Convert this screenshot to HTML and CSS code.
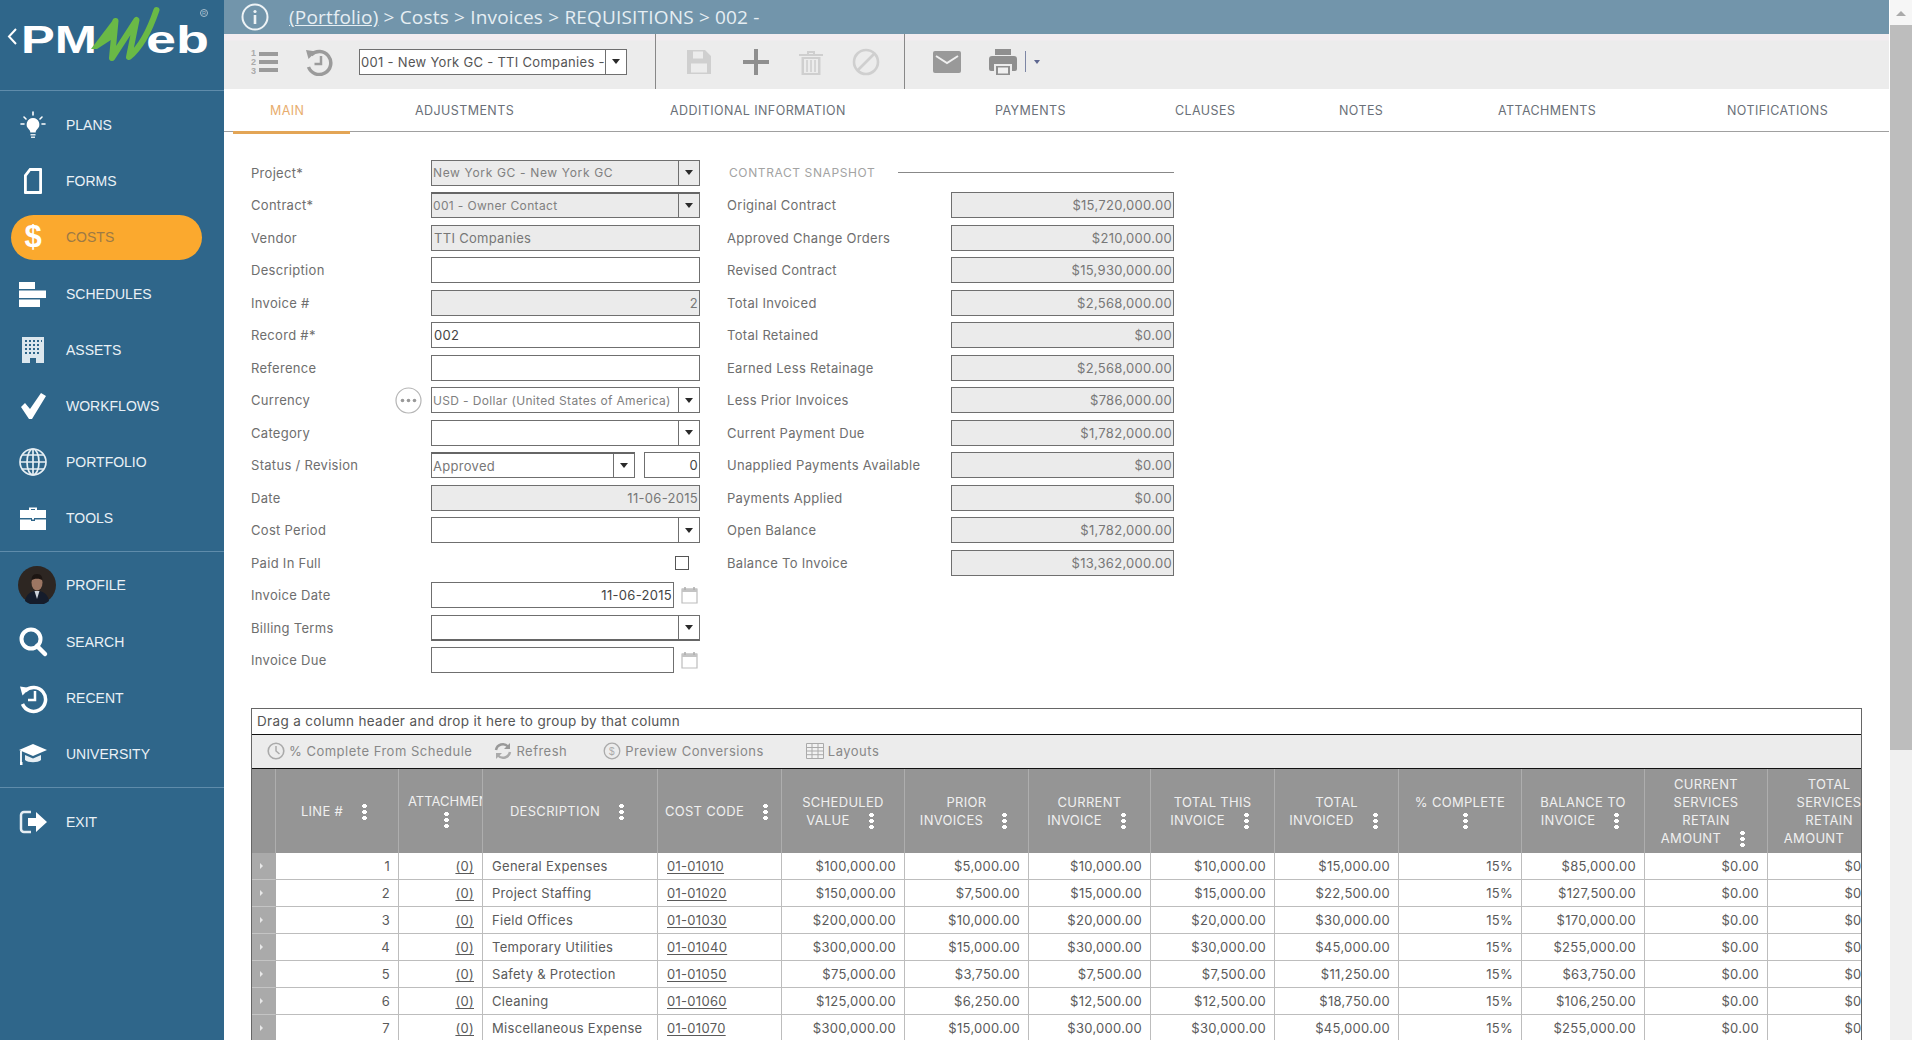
FILE: index.html
```html
<!DOCTYPE html>
<html lang="en">
<head>
<meta charset="utf-8">
<title>PMWeb - Invoices</title>
<link rel="stylesheet" href="styles.css">
</head>
<body>
<div class="app">
  <nav class="sidebar">
    <div class="logo">
      <svg width="224" height="90" viewBox="0 0 224 90">
        <polyline points="16,29 9,36.500 16,44" fill="none" stroke="#fff" stroke-width="2"/>
        <text x="21" y="52.500" class="logo-text" font-size="38" textLength="76" lengthAdjust="spacingAndGlyphs">PM</text>
        <text x="146" y="52.500" class="logo-text" font-size="38" textLength="63" lengthAdjust="spacingAndGlyphs">eb</text>
        <path d="M91 49 L113 20 L118 20 L114 38 L97 49 Z" fill="#6ab946"/>
        <path d="M115.500 21 L112 58 L136.500 20 L129 57 Q145 44 156.500 10" fill="none" stroke="#6ab946" stroke-width="6" stroke-linejoin="round" stroke-linecap="round"/>
        <circle cx="204" cy="13" r="3.500" fill="none" stroke="#a9bfcd" stroke-width="1"/>
        <text x="204" y="15" class="logo-r" font-size="5.500" text-anchor="middle">R</text>
      </svg>
    </div>
    <div class="nav-group first">
      <a class="nav-item">
        <svg class="nav-icon" viewBox="0 0 32 32"><path d="M16 9a6.500 6.500 0 0 0-4 11.500c1 1 1.300 2 1.300 3h5.400c0-1 .3-2 1.300-3A6.500 6.500 0 0 0 16 9z" fill="#fff"/><path d="M13.500 25h5v1.500h-5zM14 27.500h4V29h-4z" fill="#dfe8ee"/><path d="M16 3v3M7 8l2 2M25 8l-2 2M4 15h3M25 15h3" stroke="#fff" stroke-width="1.600" stroke-linecap="round"/></svg>
        <span>PLANS</span>
      </a>
      <a class="nav-item">
        <svg class="nav-icon" viewBox="0 0 32 32"><path d="M12.500 3H24a1 1 0 0 1 1 1v24a1 1 0 0 1-1 1H8a1 1 0 0 1-1-1V10z M12.500 7.500 9.800 11v15h12.400V6H13.500z" fill="#fff" fill-rule="evenodd"/></svg>
        <span>FORMS</span>
      </a>
      <a class="nav-item active">
        <span class="dollar">$</span>
        <span>COSTS</span>
      </a>
      <a class="nav-item">
        <svg class="nav-icon" viewBox="0 0 32 32"><path d="M2 4h16v7H2zM2 12.500h27v7.500H2zM2 21.500h21V29H2z" fill="#fff"/></svg>
        <span>SCHEDULES</span>
      </a>
      <a class="nav-item">
        <svg class="nav-icon" viewBox="0 0 32 32"><path d="M5 3h22v26H19v-5h-6v5H5z" fill="#dce7ee"/><path d="M8 6h2v2H8zM12 6h2v2h-2zM16 6h2v2h-2zM20 6h2v2h-2zM24 6h1v2h-1zM8 10h2v2H8zM12 10h2v2h-2zM16 10h2v2h-2zM20 10h2v2h-2zM8 14h2v2H8zM12 14h2v2h-2zM16 14h2v2h-2zM20 14h2v2h-2zM8 18h2v2H8zM12 18h2v2h-2zM16 18h2v2h-2zM20 18h2v2h-2z" fill="#2f668a"/></svg>
        <span>ASSETS</span>
      </a>
      <a class="nav-item">
        <svg class="nav-icon" viewBox="0 0 32 32"><path d="M4 17l4-4 5 6L24 3l5 3-14 23h-3z" fill="#fff"/></svg>
        <span>WORKFLOWS</span>
      </a>
      <a class="nav-item">
        <svg class="nav-icon" viewBox="0 0 32 32"><g fill="none" stroke="#e6eef3" stroke-width="1.700"><circle cx="16" cy="16" r="13"/><ellipse cx="16" cy="16" rx="6" ry="13"/><path d="M16 3v26M3 16h26M5 9h22M5 23h22"/></g></svg>
        <span>PORTFOLIO</span>
      </a>
      <a class="nav-item">
        <svg class="nav-icon" viewBox="0 0 32 32"><path d="M12 8V5.500h8V8h-2V7h-4v1z" fill="#fff"/><path d="M3 8h26v8H17v1.500h-2V16H3zM3 17.500h11V19h4v-1.500h11V28H3z" fill="#fff"/></svg>
        <span>TOOLS</span>
      </a>
    </div>
    <div class="nav-group">
      <a class="nav-item">
        <svg class="nav-icon avatar" viewBox="0 0 38 38"><circle cx="19" cy="19" r="19" fill="#2d2622"/><path d="M7 35c1-7 6-9 9-10h6c3 1 8 3 9 10a19 19 0 0 1-24 0z" fill="#151c2b"/><path d="M16.500 25l2.500 8 2.500-8z" fill="#cfd3da"/><ellipse cx="19" cy="16.500" rx="5.500" ry="8" fill="#9c7663"/><path d="M13.500 14.500c0-5.500 3-6.500 5.500-6.500s5.500 1 5.500 6.500c-2-2.500-9-2.500-11 0z" fill="#1c1512"/></svg>
        <span>PROFILE</span>
      </a>
      <a class="nav-item">
        <svg class="nav-icon" viewBox="0 0 32 32"><circle cx="14" cy="13" r="9.500" fill="none" stroke="#fff" stroke-width="4"/><path d="M20 20l8 8" stroke="#fff" stroke-width="4.500" stroke-linecap="round"/></svg>
        <span>SEARCH</span>
      </a>
      <a class="nav-item">
        <svg class="nav-icon" viewBox="0 0 32 32"><path d="M8 9a12 12 0 1 1-2.500 13" fill="none" stroke="#fff" stroke-width="3.500"/><path d="M3 4.500l10 1.500-7.500 7.500z" fill="#fff"/><path d="M18 9v9h-7" fill="none" stroke="#fff" stroke-width="2.500"/></svg>
        <span>RECENT</span>
      </a>
      <a class="nav-item">
        <svg class="nav-icon" viewBox="0 0 32 32"><path d="M16 6 2 12l14 6 14-6z" fill="#fff"/><path d="M8 17v5c3 3 13 3 16 0v-5l-8 3.500z" fill="#e6eef3"/><path d="M4 13v11" stroke="#fff" stroke-width="1.800"/><path d="M3 24h2.500v3H3z" fill="#fff"/></svg>
        <span>UNIVERSITY</span>
      </a>
    </div>
    <div class="nav-group last">
      <a class="nav-item">
        <svg class="nav-icon" viewBox="0 0 32 32"><path d="M14 6H7a3 3 0 0 0-3 3v14a3 3 0 0 0 3 3h7" fill="none" stroke="#e6eef3" stroke-width="2.500"/><path d="M11 12h8V6l11 10-11 10v-6h-8z" fill="#fff"/></svg>
        <span>EXIT</span>
      </a>
    </div>
  </nav>

  <main class="main">
    <header class="topbar">
      <svg class="info" width="28" height="28" viewBox="0 0 28 28"><circle cx="14" cy="14" r="12.500" fill="none" stroke="#eef3f6" stroke-width="2"/><circle cx="14" cy="8.500" r="1.600" fill="#eef3f6"/><path d="M12.700 12h2.600v9h-2.600z" fill="#eef3f6"/></svg>
      <div class="crumbs"><a>(Portfolio)</a> &gt; Costs &gt; Invoices &gt; REQUISITIONS &gt; 002 -</div>
    </header>

    <div class="toolbar">
      <svg class="tool tool-list" width="28" height="28" viewBox="0 0 28 28"><path d="M8 4h19v4H8zM8 12h19v4H8zM8 20h19v4H8z" fill="#9b9b9b"/><text x="0" y="8" class="tool-num">1</text><text x="0" y="17" class="tool-num">2</text><text x="0" y="26" class="tool-num">3</text></svg>
      <svg class="tool tool-hist" width="28" height="28" viewBox="0 0 28 28"><path d="M6 7a11.500 11.500 0 1 1-2.500 12" fill="none" stroke="#9b9b9b" stroke-width="3.500"/><path d="M1 2l10 1.500-7.500 7.500z" fill="#9b9b9b"/><path d="M16 8v8H9.500" fill="none" stroke="#9b9b9b" stroke-width="2.500"/></svg>
      <div class="select record-select">
        <span class="select-text">001 - New York GC - TTI Companies -</span>
        <span class="select-btn"><i class="arrow"></i></span>
      </div>
      <div class="tool-sep sep-a"></div>
      <svg class="tool tool-save" width="28" height="28" viewBox="0 0 28 28"><path d="M2 2h18l6 6v18H2z M8 3.500v7h10v-7z M6 15.500v9h16v-9z" fill="#cfcfcf" fill-rule="evenodd"/></svg>
      <svg class="tool tool-plus" width="28" height="28" viewBox="0 0 28 28"><path d="M12 1h4v11h11v4H16v11h-4V16H1v-4h11z" fill="#8f8f8f"/></svg>
      <svg class="tool tool-trash" width="28" height="28" viewBox="0 0 28 28"><path d="M2 6h24v2H2zM10 3h8v3h-2V5h-4v1h-2zM4.500 9h19v18h-19z M7 11v14h14V11z" fill="#cfcfcf" fill-rule="evenodd"/><path d="M10 12v12M14 12v12M18 12v12" stroke="#cfcfcf" stroke-width="1.600"/></svg>
      <svg class="tool tool-ban" width="28" height="28" viewBox="0 0 28 28"><circle cx="14" cy="14" r="12" fill="none" stroke="#cfcfcf" stroke-width="2.600"/><path d="M6 22 22 6" stroke="#cfcfcf" stroke-width="2.600"/></svg>
      <div class="tool-sep sep-b"></div>
      <svg class="tool tool-mail" width="28" height="22" viewBox="0 0 28 22"><path d="M2 0h24a2 2 0 0 1 2 2v18a2 2 0 0 1-2 2H2a2 2 0 0 1-2-2V2a2 2 0 0 1 2-2z" fill="#999"/><path d="M3 5l11 7 11-7" fill="none" stroke="#f0f0f0" stroke-width="2"/></svg>
      <svg class="tool tool-print" width="28" height="26" viewBox="0 0 28 26"><path d="M6 0h16v6H6z" fill="#8f8f8f"/><path d="M3 7h22a3 3 0 0 1 3 3v10a2 2 0 0 1-2 2h-3v-7H5v7H2a2 2 0 0 1-2-2V10a3 3 0 0 1 3-3z" fill="#8f8f8f"/><path d="M7 17h14v9H7z" fill="#8f8f8f"/><path d="M9 18.500h10v6H9z" fill="#f0f0f0"/></svg>
      <span class="print-sep"></span>
      <i class="print-arrow"></i>
    </div>

    <div class="tabs">
      <a class="tab active">MAIN</a>
      <a class="tab">ADJUSTMENTS</a>
      <a class="tab">ADDITIONAL INFORMATION</a>
      <a class="tab">PAYMENTS</a>
      <a class="tab">CLAUSES</a>
      <a class="tab">NOTES</a>
      <a class="tab">ATTACHMENTS</a>
      <a class="tab">NOTIFICATIONS</a>
    </div>

    <section class="form">
      <div class="form-left">
        <label>Project*</label>
        <div class="select ro"><span class="select-text small wide">New York GC - New York GC</span><span class="select-btn"><i class="arrow"></i></span></div>
        <label>Contract*</label>
        <div class="select ro thick-top"><span class="select-text small">001 - Owner Contact</span><span class="select-btn"><i class="arrow"></i></span></div>
        <label>Vendor</label>
        <div class="box ro">TTI Companies</div>
        <label>Description</label>
        <div class="box"></div>
        <label>Invoice #</label>
        <div class="box ro num">2</div>
        <label>Record #*</label>
        <div class="box dark">002</div>
        <label>Reference</label>
        <div class="box"></div>
        <label class="with-btn">Currency
          <svg width="27" height="27" viewBox="0 0 27 27"><circle cx="13.500" cy="13.500" r="12.500" fill="#fff" stroke="#b5b5b5" stroke-width="1.200"/><circle cx="7.500" cy="13.500" r="1.800" fill="#999"/><circle cx="13.500" cy="13.500" r="1.800" fill="#999"/><circle cx="19.500" cy="13.500" r="1.800" fill="#999"/></svg>
        </label>
        <div class="select"><span class="select-text small">USD - Dollar (United States of America)</span><span class="select-btn"><i class="arrow"></i></span></div>
        <label>Category</label>
        <div class="select"><span class="select-text"></span><span class="select-btn"><i class="arrow"></i></span></div>
        <label>Status / Revision</label>
        <div class="pair">
          <div class="select thick-top"><span class="select-text">Approved</span><span class="select-btn"><i class="arrow"></i></span></div>
          <div class="box num dark">0</div>
        </div>
        <label>Date</label>
        <div class="box ro num">11-06-2015</div>
        <label>Cost Period</label>
        <div class="select"><span class="select-text"></span><span class="select-btn"><i class="arrow"></i></span></div>
        <label>Paid In Full</label>
        <div class="check-cell"><span class="check"></span></div>
        <label>Invoice Date</label>
        <div class="date-row">
          <div class="box num dark">11-06-2015</div>
          <svg class="cal" width="17" height="18" viewBox="0 0 17 18"><path d="M1 3h15v14H1z" fill="#fff" stroke="#bdbdbd" stroke-width="1.200"/><path d="M1 2.500h15V6H1z" fill="#c4c4c4"/><path d="M4 1v3M13 1v3" stroke="#b0b0b0" stroke-width="1.600"/></svg>
        </div>
        <label>Billing Terms</label>
        <div class="select thick-bottom"><span class="select-text"></span><span class="select-btn"><i class="arrow"></i></span></div>
        <label>Invoice Due</label>
        <div class="date-row">
          <div class="box"></div>
          <svg class="cal" width="17" height="18" viewBox="0 0 17 18"><path d="M1 3h15v14H1z" fill="#fff" stroke="#bdbdbd" stroke-width="1.200"/><path d="M1 2.500h15V6H1z" fill="#c4c4c4"/><path d="M4 1v3M13 1v3" stroke="#b0b0b0" stroke-width="1.600"/></svg>
        </div>
      </div>
      <div class="form-right">
        <div class="snap-title"><span>CONTRACT SNAPSHOT</span><i></i></div>
        <label>Original Contract</label><div class="box ro num">$15,720,000.00</div>
        <label>Approved Change Orders</label><div class="box ro num">$210,000.00</div>
        <label>Revised Contract</label><div class="box ro num">$15,930,000.00</div>
        <label>Total Invoiced</label><div class="box ro num">$2,568,000.00</div>
        <label>Total Retained</label><div class="box ro num">$0.00</div>
        <label>Earned Less Retainage</label><div class="box ro num">$2,568,000.00</div>
        <label>Less Prior Invoices</label><div class="box ro num">$786,000.00</div>
        <label>Current Payment Due</label><div class="box ro num">$1,782,000.00</div>
        <label>Unapplied Payments Available</label><div class="box ro num">$0.00</div>
        <label>Payments Applied</label><div class="box ro num">$0.00</div>
        <label>Open Balance</label><div class="box ro num">$1,782,000.00</div>
        <label>Balance To Invoice</label><div class="box ro num">$13,362,000.00</div>
      </div>
    </section>

    <section class="grid">
      <div class="group-bar">Drag a column header and drop it here to group by that column</div>
      <div class="grid-tools">
        <span class="gt gt-clock"><svg width="18" height="18" viewBox="0 0 18 18"><circle cx="9" cy="9" r="7.800" fill="none" stroke="#aaa" stroke-width="1.600"/><path d="M9 4v5l3.500 3" fill="none" stroke="#aaa" stroke-width="1.500"/></svg>% Complete From Schedule</span>
        <span class="gt gt-refresh"><svg width="18" height="18" viewBox="0 0 18 18"><path d="M2 8a7 7 0 0 1 12-3.500" fill="none" stroke="#999" stroke-width="2.500"/><path d="M16 1v6h-6z" fill="#999"/><path d="M16 10a7 7 0 0 1-12 3.500" fill="none" stroke="#aaa" stroke-width="2.500"/><path d="M2 17v-6h6z" fill="#aaa"/></svg>Refresh</span>
        <span class="gt gt-preview"><svg width="18" height="18" viewBox="0 0 18 18"><circle cx="9" cy="9" r="7.800" fill="none" stroke="#aaa" stroke-width="1.300"/><text x="9" y="12.500" class="gt-dollar" text-anchor="middle">$</text></svg>Preview Conversions</span>
        <span class="gt gt-layouts"><svg width="18" height="16" viewBox="0 0 18 16"><path d="M.5.500h17v15H.5zM.5 4.500h17M.5 8h17M.5 11.700h17M6 .500v15M12 .500v15" fill="#f2f2f2" stroke="#aaa" stroke-width="1"/></svg>Layouts</span>
      </div>
      <table class="lines">
        <colgroup>
          <col class="c-exp"><col class="c-123"><col class="c-84"><col class="c-175"><col class="c-124"><col class="c-123"><col class="c-124"><col class="c-122"><col class="c-124"><col class="c-124"><col class="c-123"><col class="c-123"><col class="c-123"><col class="c-123">
        </colgroup>
        <thead>
          <tr>
            <th></th>
            <th>LINE #<i class="kebab"></i></th>
            <th class="attach"><span class="nowrap">ATTACHMENTS</span><br><i class="kebab attach-dots"></i></th>
            <th>DESCRIPTION<i class="kebab"></i></th>
            <th class="tight">COST CODE<i class="kebab"></i></th>
            <th>SCHEDULED<br>VALUE<i class="kebab"></i></th>
            <th>PRIOR<br>INVOICES<i class="kebab"></i></th>
            <th>CURRENT<br>INVOICE<i class="kebab"></i></th>
            <th>TOTAL THIS<br>INVOICE<i class="kebab"></i></th>
            <th>TOTAL<br>INVOICED<i class="kebab"></i></th>
            <th>% COMPLETE<br><i class="kebab solo"></i></th>
            <th>BALANCE TO<br>INVOICE<i class="kebab"></i></th>
            <th>CURRENT<br>SERVICES<br>RETAIN<br>AMOUNT<i class="kebab"></i></th>
            <th class="tight">TOTAL<br><span class="nowrap">SERVICES</span><br>RETAIN<br>AMOUNT<i class="kebab"></i></th>
          </tr>
        </thead>
        <tbody>
          <tr><td class="exp"><i></i></td><td class="r">1</td><td class="r"><u>(0)</u></td><td>General Expenses</td><td><u>01-01010</u></td><td class="r">$100,000.00</td><td class="r">$5,000.00</td><td class="r">$10,000.00</td><td class="r">$10,000.00</td><td class="r">$15,000.00</td><td class="r">15%</td><td class="r">$85,000.00</td><td class="r">$0.00</td><td class="r">$0.00</td></tr>
          <tr><td class="exp"><i></i></td><td class="r">2</td><td class="r"><u>(0)</u></td><td>Project Staffing</td><td><u>01-01020</u></td><td class="r">$150,000.00</td><td class="r">$7,500.00</td><td class="r">$15,000.00</td><td class="r">$15,000.00</td><td class="r">$22,500.00</td><td class="r">15%</td><td class="r">$127,500.00</td><td class="r">$0.00</td><td class="r">$0.00</td></tr>
          <tr><td class="exp"><i></i></td><td class="r">3</td><td class="r"><u>(0)</u></td><td>Field Offices</td><td><u>01-01030</u></td><td class="r">$200,000.00</td><td class="r">$10,000.00</td><td class="r">$20,000.00</td><td class="r">$20,000.00</td><td class="r">$30,000.00</td><td class="r">15%</td><td class="r">$170,000.00</td><td class="r">$0.00</td><td class="r">$0.00</td></tr>
          <tr><td class="exp"><i></i></td><td class="r">4</td><td class="r"><u>(0)</u></td><td>Temporary Utilities</td><td><u>01-01040</u></td><td class="r">$300,000.00</td><td class="r">$15,000.00</td><td class="r">$30,000.00</td><td class="r">$30,000.00</td><td class="r">$45,000.00</td><td class="r">15%</td><td class="r">$255,000.00</td><td class="r">$0.00</td><td class="r">$0.00</td></tr>
          <tr><td class="exp"><i></i></td><td class="r">5</td><td class="r"><u>(0)</u></td><td>Safety &amp; Protection</td><td><u>01-01050</u></td><td class="r">$75,000.00</td><td class="r">$3,750.00</td><td class="r">$7,500.00</td><td class="r">$7,500.00</td><td class="r">$11,250.00</td><td class="r">15%</td><td class="r">$63,750.00</td><td class="r">$0.00</td><td class="r">$0.00</td></tr>
          <tr><td class="exp"><i></i></td><td class="r">6</td><td class="r"><u>(0)</u></td><td>Cleaning</td><td><u>01-01060</u></td><td class="r">$125,000.00</td><td class="r">$6,250.00</td><td class="r">$12,500.00</td><td class="r">$12,500.00</td><td class="r">$18,750.00</td><td class="r">15%</td><td class="r">$106,250.00</td><td class="r">$0.00</td><td class="r">$0.00</td></tr>
          <tr><td class="exp"><i></i></td><td class="r">7</td><td class="r"><u>(0)</u></td><td>Miscellaneous Expense</td><td><u>01-01070</u></td><td class="r">$300,000.00</td><td class="r">$15,000.00</td><td class="r">$30,000.00</td><td class="r">$30,000.00</td><td class="r">$45,000.00</td><td class="r">15%</td><td class="r">$255,000.00</td><td class="r">$0.00</td><td class="r">$0.00</td></tr>
        </tbody>
      </table>
    </section>
  </main>

  <aside class="scrollbar">
    <div class="sb-up"><i></i></div>
    <div class="sb-thumb"></div>
  </aside>
</div>
</body>
</html>
```

FILE: styles.css
```css
* { box-sizing: border-box; }
html, body { margin: 0; height: 100%; overflow: hidden; background: #fff; }
body { font-family: "Inter", "Liberation Sans", sans-serif; font-size: 13px; color: #666; }
a { color: inherit; text-decoration: none; }

.app { display: flex; width: 1914px; height: 1040px; overflow: hidden; }

/* Sidebar */
.sidebar { flex: 0 0 224px; background: #2f668a; }
.logo { height: 91px; border-bottom: 1px solid #5f8cab; }
.logo svg { display: block; }
.logo-text { font-family: "Liberation Sans", sans-serif; font-weight: 700; fill: #fff; }
.logo-r { font-family: "Liberation Sans", sans-serif; fill: #a9bfcd; }
.nav-group { display: flex; flex-direction: column; gap: 11.200px; padding: 11px 0; border-bottom: 1px solid #5f8cab; }
.nav-group.first { padding: 11.500px 0 10px; }
.nav-group.last { padding-top: 11.500px; border-bottom: 0; }
.nav-item { display: flex; align-items: center; flex: none; width: 191px; height: 45px; margin-left: 11px; padding-left: 6px; border-radius: 23px; font-family: "Liberation Sans", sans-serif; font-size: 14px; color: #eaf1f6; }
.nav-item.active { background: #fba92e; color: #9d7a45; }
.nav-icon { flex: 0 0 32px; width: 32px; height: 32px; margin-right: 17px; }
.nav-icon.avatar { flex-basis: 38px; width: 38px; height: 38px; margin: 0 10px 0 1px; }
.dollar { flex: 0 0 32px; margin-right: 17px; text-align: center; font-size: 31px; font-weight: 700; color: #fff; }

/* Main column */
.main { flex: 0 0 1665px; overflow: hidden; }
.topbar { display: flex; align-items: center; height: 34px; padding-left: 17px; background: #7295ab; color: #eef3f6; }
.info { flex: none; }
.crumbs { margin-left: 20px; font-family: "Open Sans", sans-serif; font-size: 19px; letter-spacing: .18px; white-space: nowrap; color: #e6eef3; }
.crumbs a { text-decoration: underline; }

.toolbar { display: flex; align-items: center; height: 55px; padding-left: 27px; background: linear-gradient(#f2ecf0 6px, #ececec 7px); }
.tool { flex: none; }
.tool-num { font-family: "Liberation Sans", sans-serif; font-size: 9px; font-weight: 700; fill: #aaa; }
.tool-hist { margin-left: 26px; }
.record-select { flex: 0 0 268px; min-width: 0; margin-left: 26px; border-color: #555; }
.record-select .select-text { color: #555; }
.tool-sep { flex: none; align-self: stretch; width: 1px; background: #888; }
.sep-a { margin-left: 28px; }
.tool-save { margin-left: 29px; }
.tool-plus { margin-left: 29px; }
.tool-trash { margin-left: 27px; }
.tool-ban { margin-left: 27px; }
.sep-b { margin-left: 24px; }
.tool-mail { margin-left: 28px; }
.tool-print { margin-left: 28px; }
.print-sep { flex: none; width: 1px; height: 21px; margin-left: 8px; background: #7d86a5; }
.print-arrow { flex: none; margin-left: 8px; border: 3.500px solid transparent; border-top: 4px solid #5d6690; border-bottom: 0; }

.tabs { display: grid; grid-template-columns: 145px 255px 325px 180px 164px 159px 229px auto; align-items: center; height: 43px; padding-left: 46px; border-bottom: 1.500px solid #a0a0a0; font-size: 12.500px; letter-spacing: .42px; color: #6a7078; }
.tab { position: relative; line-height: 43px; white-space: nowrap; }
.tab.active { color: #e8ad6e; }
.tab.active::after { content: ""; position: absolute; left: -37px; bottom: -1.500px; width: 117px; height: 3px; background: #e3a556; }

/* Form */
.form { display: flex; padding: 27.500px 0 0 27px; }
.form-left { display: grid; grid-template-columns: 180px 269px; grid-auto-rows: 26px; row-gap: 6.500px; }
.form-right { display: grid; grid-template-columns: 223px 224px; grid-auto-rows: 26px; row-gap: 6.500px; margin-left: 27px; align-content: start; }
.form-right .box { margin-left: 1px; }
label { display: flex; align-items: center; font-size: 13px; letter-spacing: .3px; color: #6e6e6e; }
.with-btn { justify-content: space-between; padding-right: 9px; }
.box { display: flex; align-items: center; height: 26px; padding: 0 2px; border: 1px solid #6f6f6f; background: #fff; font-size: 13px; letter-spacing: .3px; color: #777; white-space: nowrap; overflow: hidden; }
.box.ro { background: #ebebeb; }
.box.num { justify-content: flex-end; padding-right: 1px; }
.box.dark { color: #444; }
.select { display: flex; align-items: center; height: 26px; border: 1px solid #6f6f6f; background: #fff; }
.select.ro { background: #ebebeb; }
.select.thick-top { border-top: 2px solid #666; }
.select.thick-bottom { border-bottom: 2px solid #666; }
.select-text { flex: 1; min-width: 0; padding-left: 1px; overflow: hidden; white-space: nowrap; font-size: 13px; letter-spacing: .3px; color: #777; }
.select-text.small { font-size: 12px; letter-spacing: .35px; color: #808080; }
.select-text.wide { letter-spacing: .65px; }
.select-btn { flex: none; display: flex; align-items: center; justify-content: center; align-self: stretch; width: 21px; border-left: 1px solid #6f6f6f; }
.arrow { border: 4px solid transparent; border-top: 5px solid #2a2a2a; border-bottom: 0; }
.pair { display: flex; justify-content: space-between; }
.pair .select { width: 204px; }
.pair .box { width: 56px; }
.date-row { display: flex; align-items: center; }
.date-row .box { flex: 0 0 243px; }
.cal { flex: none; margin-left: 7px; }
.check-cell { display: flex; align-items: center; justify-content: flex-end; padding-right: 11px; }
.check { width: 14px; height: 14px; border: 1px solid #555; background: #fff; }
.snap-title { grid-column: 1 / -1; display: flex; align-items: center; padding-left: 2px; font-size: 12px; letter-spacing: .6px; color: #a3a3a3; }
.snap-title i { flex: 1; height: 1px; margin-left: 23px; background: #888; }

/* Grid */
.grid { width: 1611px; margin: 34.500px 0 0 27px; border-left: 1px solid #666; border-right: 1px solid #666; overflow: hidden; }
.group-bar { height: 27px; padding: 0 0 0 5px; border-top: 1px solid #666; border-bottom: 1px solid #111; line-height: 25px; font-size: 13.500px; letter-spacing: .35px; color: #555; }
.grid-tools { display: flex; align-items: center; height: 34px; padding-left: 15px; background: #ececec; border-bottom: 1px solid #111; font-size: 13px; letter-spacing: .5px; color: #888; }
.gt { display: flex; align-items: center; white-space: nowrap; }
.gt svg { flex: none; margin-right: 4px; }
.gt-refresh { margin-left: 22px; }
.gt-preview { margin-left: 36px; }
.gt-layouts { margin-left: 42px; }
.gt-dollar { font-family: "Liberation Sans", sans-serif; font-size: 10px; fill: #aaa; }

.lines { table-layout: fixed; width: 1639px; border-collapse: separate; border-spacing: 0; }
.c-exp { width: 24px; } .c-122 { width: 122px; } .c-123 { width: 123px; } .c-124 { width: 124px; } .c-84 { width: 84px; } .c-175 { width: 175px; }
th { height: 84px; padding: 2px 8px 0; background: #959595; border-right: 1px solid #aeaeae; font-weight: 400; font-size: 13px; letter-spacing: .3px; line-height: 18px; color: #f0f0f0; text-align: center; overflow: hidden; }
th.tight { padding: 2px 0 0; white-space: nowrap; }
th.attach { padding: 0 0 0 9px; text-align: left; white-space: nowrap; letter-spacing: 0; }
.nowrap { white-space: nowrap; }
.kebab { display: inline-block; vertical-align: middle; width: 5px; height: 18px; margin: 0 6px 0 19px; background: radial-gradient(circle at center, #fff 2.100px, transparent 2.400px) 0 0 / 5px 6px repeat-y; }
.kebab.solo { margin: 0 0 0 10px; }
.kebab.attach-dots { margin: 0 0 0 36px; }
td { height: 27px; padding: 0 8px 0 9px; border-right: 1px solid #bdbdbd; border-bottom: 1px solid #bdbdbd; font-size: 13px; letter-spacing: .3px; color: #5a5a5a; white-space: nowrap; overflow: hidden; }
td.r { text-align: right; }
td.exp { padding: 0; background: #aaa; border-right-color: #aaa; border-bottom-color: #c4c4c4; }
td.exp i { display: block; width: 0; margin-left: 8px; border: 3px solid transparent; border-left: 3px solid #e8e8e8; border-right: 0; }
td u { text-underline-offset: 2px; }

/* Page scrollbar */
.scrollbar { flex: 0 0 25px; padding: 0 2px 0 1px; background: linear-gradient(#f0f0f0, #f0f0f0) 1px 0 / 22px 100% no-repeat; }
.sb-up { display: flex; justify-content: center; height: 25px; padding-top: 11px; background: #f6f6f6; }
.sb-up i { width: 0; height: 0; border: 5px solid transparent; border-bottom: 5px solid #aaa; border-top: 0; }
.sb-thumb { height: 725px; background: #bdbdbd; }
```
